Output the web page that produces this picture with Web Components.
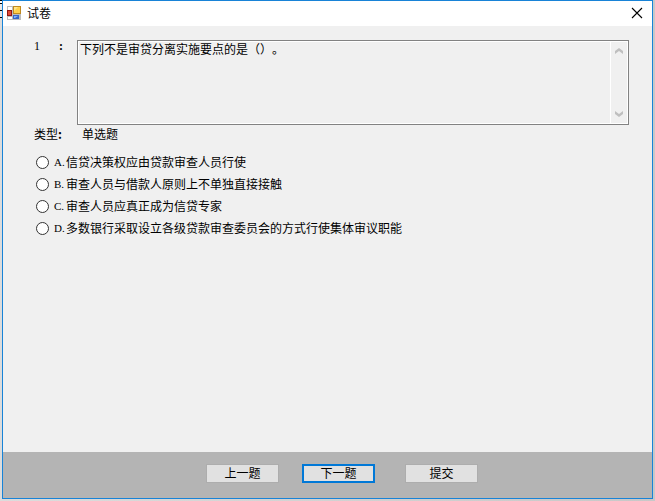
<!DOCTYPE html>
<html lang="zh-CN">
<head>
<meta charset="utf-8">
<title>试卷</title>
<style>
html,body{height:100%;margin:0}
body{background:linear-gradient(90deg,#dcdcdc,#c8c8c8);font:12px/14px "Noto Sans CJK SC","Liberation Sans",sans-serif;color:#000;text-spacing-trim:space-all;font-kerning:none;box-sizing:border-box;padding:0 2px 2px;display:flex;position:relative}
/* sliver of the window behind */
body::before{content:"";position:absolute;left:0;top:0;width:2px;height:18px;background:linear-gradient(#000 1px,#fff 1px 3px,#000 3px 4px,#e8e8e8 4px 10px,#000 10px 11px,#e8e8e8 11px 17px,#000 17px)}
</style>
</head>
<body>
<exam-window heading="试卷">
  <exam-question number="1" type="单选题" text="下列不是审贷分离实施要点的是（）。">
    <exam-option key="A.">信贷决策权应由贷款审查人员行使</exam-option>
    <exam-option key="B.">审查人员与借款人原则上不单独直接接触</exam-option>
    <exam-option key="C.">审查人员应真正成为信贷专家</exam-option>
    <exam-option key="D.">多数银行采取设立各级贷款审查委员会的方式行使集体审议职能</exam-option>
  </exam-question>
  <exam-button slot="actions">上一题</exam-button>
  <exam-button slot="actions" primary>下一题</exam-button>
  <exam-button slot="submit">提交</exam-button>
</exam-window>
<script>
class ExamWindow extends HTMLElement{
  constructor(){
    super();
    this.attachShadow({mode:'open'}).innerHTML=`
<style>
:host{flex:1;display:flex;flex-direction:column;box-sizing:border-box;border:1px solid #1883d7;background:#f0f0f0}
header{display:flex;align-items:center;height:25px;box-sizing:border-box;background:#fff;padding:0 9px 1px 4px;gap:6px}
h1{flex:1;margin:0;font:inherit}
header button{border:0;background:none;padding:0;width:12px;height:12px;display:flex}
svg{display:block;flex:none}
main{flex:1;padding:14px 23px 0 31px}
footer{display:flex;justify-content:center;gap:30px;height:46px;box-sizing:border-box;padding:12px 0 14px 29px;background:#b4b4b4}
nav{display:flex;gap:23px}
</style>
<header>
<svg width="14" height="14" viewBox="0 0 14 14" aria-hidden="true">
<rect width="14" height="14" fill="#bdbdbd"/><path d="M1 1h4v3H1zM1 11h4v2H1z" fill="#fff"/>
<rect x="6" width="8" height="8" fill="#c08a20"/><rect x="7" y="1" width="6" height="6" fill="#ffd04a"/><path d="M7 1h4L7 5z" fill="#ffe68c"/>
<rect y="4" width="5" height="6" fill="#8f1714"/><rect x="1" y="5" width="3" height="4" fill="#e04a35"/>
<rect x="6" y="9" width="6" height="4" fill="#3566c8"/><path d="M7 10h4l-3 2H7z" fill="#83b4fa"/>
</svg>
<h1></h1>
<button aria-label="关闭"><svg width="12" height="12" viewBox="0 0 12 12"><path d="M1 1l10 10M11 1L1 11" stroke="#000" stroke-width="1.1"/></svg></button>
</header>
<main><slot></slot></main>
<footer><nav><slot name="actions"></slot></nav><slot name="submit"></slot></footer>`;
    this.shadowRoot.querySelector('h1').textContent=this.getAttribute('heading');
  }
}
class ExamQuestion extends HTMLElement{
  constructor(){
    super();
    this.attachShadow({mode:'open'}).innerHTML=`
<style>
:host{display:block}
.row{display:grid;grid-template-columns:24px 19px 1fr}
.row label{display:contents}
.num,.colon{font-family:"Liberation Serif",serif;line-height:12px}
.colon{font-weight:bold;padding-left:1px}
.box{display:flex;height:85px;box-sizing:border-box;border:1px solid #828282;padding:1px;background:#f0f0f0;box-shadow:inset 0 0 0 1px #fff}
textarea{flex:1;min-width:0;resize:none;border:0;outline:0;padding:0 1px;margin:0;background:none;font:inherit;color:inherit;text-spacing-trim:inherit;font-kerning:inherit;overflow:hidden}
.bar{width:16px;border-left:1px solid #fff;display:flex;flex-direction:column;justify-content:space-between;align-items:center;padding:6px 0}
.bar svg{display:block}
.type{display:flex;gap:20px;margin:2px 0 12px}
.opts{display:grid;gap:4px;border:0;margin:0;padding:0 0 0 2px}
</style>
<div class="row"><label for="q"><span class="num"></span><span class="colon">:</span></label>
<div class="box"><textarea id="q" readonly></textarea>
<div class="bar"><svg width="8" height="7" viewBox="0 0 8 7"><path d="M0 3l4-3 4 3v3L4 3 0 6z" fill="#bfbfbf"/></svg><svg width="8" height="7" viewBox="0 0 8 7"><path d="M0 4l4 3 4-3V1L4 4 0 1z" fill="#bfbfbf"/></svg></div></div></div>
<div class="type"><span>类型<b>:</b></span><span id="t"></span></div>
<fieldset class="opts" aria-label="选项"><slot></slot></fieldset>`;
    const r=this.shadowRoot;
    r.querySelector('.num').textContent=this.getAttribute('number');
    r.querySelector('textarea').value=this.getAttribute('text');
    r.querySelector('#t').textContent=this.getAttribute('type');
    this.addEventListener('change',e=>{
      for(const o of this.children) if(o!==e.target) o.checked=false;
    });
  }
}
class ExamOption extends HTMLElement{
  constructor(){
    super();
    this.attachShadow({mode:'open'}).innerHTML=`
<style>
:host{display:block}
label{display:grid;grid-template-columns:18px 12px 1fr;align-items:center;height:18px}
input{appearance:none;width:13px;height:13px;margin:0;border:1px solid #333;border-radius:50%;background:#fff}
input:checked{background:radial-gradient(#000 3px,#fff 4px)}
.key{font:11px/14px "Liberation Serif",serif}
.text{white-space:nowrap}
</style>
<label><input type="radio"><span class="key"></span><span class="text"><slot></slot></span></label>`;
    this.shadowRoot.querySelector('.key').textContent=this.getAttribute('key');
    this.shadowRoot.querySelector('input').addEventListener('change',()=>this.dispatchEvent(new Event('change',{bubbles:true})));
  }
  set checked(v){this.shadowRoot.querySelector('input').checked=v}
}
class ExamButton extends HTMLElement{
  constructor(){
    super();
    this.attachShadow({mode:'open'}).innerHTML=`
<style>
:host{display:flex}
button{width:73px;height:19px;box-sizing:border-box;padding:0 0 1px;border:1px solid #adadad;background:#e1e1e1;font:inherit;line-height:14px;color:#000}
:host([primary]) button{border:2px solid #0078d7}
</style><button><slot></slot></button>`;
  }
}
customElements.define('exam-option',ExamOption);
customElements.define('exam-button',ExamButton);
customElements.define('exam-question',ExamQuestion);
customElements.define('exam-window',ExamWindow);
</script>
</body>
</html>
